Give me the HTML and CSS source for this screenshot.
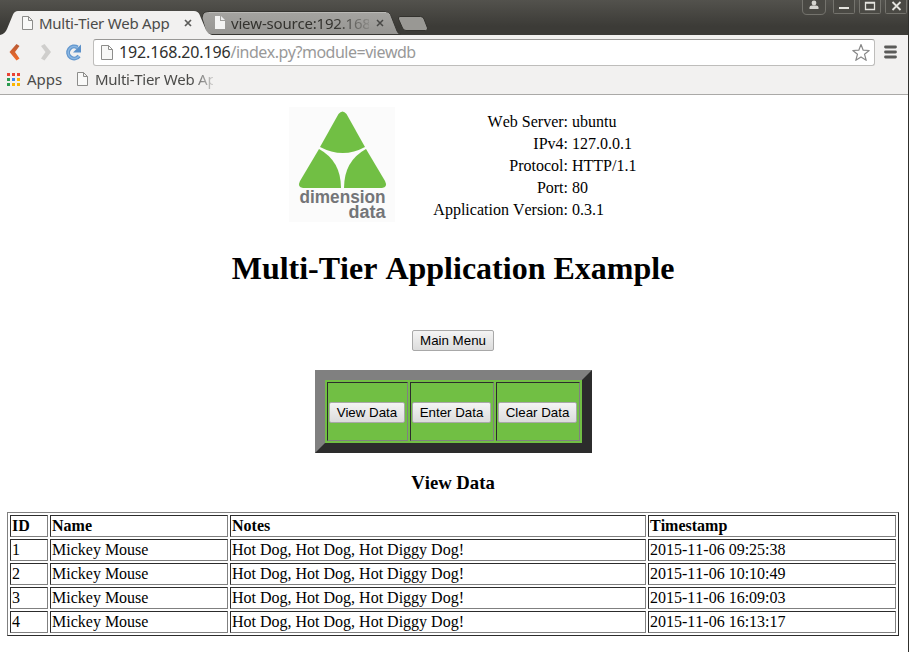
FILE: index.html
```html
<!DOCTYPE html>
<html lang="en">
<head>
<meta charset="utf-8">
<title>Multi-Tier Web App</title>
<link rel="stylesheet" href="styles.css">
</head>
<body>
<div class="window">
  <header class="titlebar">
    <svg class="tab-shapes" width="440" height="35" viewBox="0 0 440 35">
      <defs>
        <linearGradient id="idle" x1="0" y1="0" x2="0" y2="1"><stop offset="0" stop-color="#a5a4a1"/><stop offset="1" stop-color="#969592"/></linearGradient>
      </defs>
      <path d="M203 14Q204.500 11.500 208 11.500H385Q389 11.500 390.500 14.500L397 31Q398 34 401 34.500H212Q207 34.500 205.500 30L202 18Z" fill="url(#idle)" stroke="#373632"/>
      <path d="M209 12.500H386" stroke="#bab9b6"/>
      <path d="M400 16.500H420.500Q423 16.500 424 19L427.500 28Q428 30.500 425.500 30.500H406Q403.500 30.500 402.500 28L398.500 19Q398 16.500 400 16.500Z" fill="#999894" stroke="#33322e"/>
      <path d="M0 35Q5 34 7 29L13 14.500Q14.500 11 18 11H194Q198 11 199.500 14.500L206 30Q208 34 212 35Z" fill="#f2f1f0"/>
    </svg>
    <div class="tab tab-active">
      <svg class="page-icon" width="12" height="15" viewBox="0 0 12 15"><path d="M1.500 1.500H7.500L11.500 5.500V14.500H1.500ZM7.500 1.500V5.500H11.500" fill="#f9f9f8" stroke="#8d8d8b"/></svg>
      <span class="tab-title">Multi-Tier Web App</span>
      <svg class="close" width="8" height="8" viewBox="0 0 8 8"><path d="M1 1L7 7M7 1L1 7" stroke="#5b5b59" stroke-width="1.700"/></svg>
    </div>
    <div class="tab tab-idle">
      <svg class="page-icon" width="12" height="15" viewBox="0 0 12 15"><path d="M1 1H6V6H11V14H1Z" fill="#f4f4f3"/><path d="M7 1L11 5H7Z" fill="#eee"/></svg>
      <span class="tab-title">view-source:192.168</span>
      <svg class="close" width="8" height="8" viewBox="0 0 8 8"><path d="M1 1L7 7M7 1L1 7" stroke="#484846" stroke-width="1.500"/></svg>
    </div>
    <svg class="controls" width="108" height="16" viewBox="0 0 108 16">
      <g fill="#4a4944" stroke="#74736d"><path d="M2.500-2V10Q2.500 14.500 7 14.500H21Q25.500 14.500 25.500 10V-2Z"/><rect x="33.500" y="-3" width="21" height="16.500" rx="1"/><rect x="59.500" y="-3" width="21" height="16.500" rx="1"/><rect x="85.500" y="-3" width="21" height="16.500" rx="1"/></g>
      <circle cx="14" cy="3" r="2.400" fill="#d5d4cf"/><path d="M9.500 9V7.500Q9.500 5.500 12 5.500H16Q18.500 5.500 18.500 7.500V9Z" fill="#d5d4cf"/>
      <path d="M39 8H49" stroke="#e4e3de" stroke-width="2"/><path d="M65.500 2.500H74.500V9.500H65.500ZM65 3H75" fill="none" stroke="#e4e3de" stroke-width="1.300"/>
      <path d="M92.500 2L100.500 10M100.500 2L92.500 10" stroke="#e4e3de" stroke-width="1.800"/>
    </svg>
  </header>
  <div class="toolbar">
    <svg class="nav" width="93" height="35" viewBox="0 0 93 35">
      <defs><linearGradient id="back" x1="0" y1="0" x2="0" y2="1"><stop offset="0" stop-color="#b85a35"/><stop offset="1" stop-color="#f16b29"/></linearGradient></defs>
      <path d="M16.500 9L9.500 17L16.500 25.500L19.500 23.500L15 17L19.500 11Z" fill="url(#back)"/>
      <path d="M44.500 9L51 17L44.500 25.500L41 23.500L45.500 17L41 11Z" fill="#cfcecc"/>
      <path d="M77.500 12.500A6 6 0 1 0 79 21" fill="none" stroke="#6296cd" stroke-width="4"/>
      <path d="M77.500 12.500A6 6 0 1 0 79 21" fill="none" stroke="#8bb7e2" stroke-width="1.500"/>
      <path d="M81 9.500V17.500H73Z" fill="#5c91c9"/>
    </svg>
    <div class="address">
      <svg width="12" height="15" viewBox="0 0 12 15"><path d="M.5 .5H7.500L11.500 4.500V14.500H.5ZM7.500 .5V4.500H11.500" fill="#f7f7f6" stroke="#8d8d8b"/></svg>
      <span class="url"><span class="host">192.168.20.196</span><span class="path">/index.py?module=viewdb</span></span>
      <svg class="star" width="20" height="19" viewBox="0 0 20 19"><path d="M10 1.500L12.200 7.200L18.200 7.500L13.500 11.200L15.200 17.300L10 13.900L4.800 17.300L6.500 11.200L1.800 7.500L7.800 7.200Z" fill="#fff" stroke="#888" stroke-width="1.200" stroke-linejoin="round"/></svg>
    </div>
    <svg class="menu" width="13" height="14" viewBox="0 0 13 14"><path d="M1.500 2H11.500M1.500 7H11.500M1.500 12H11.500" stroke="#5a5a58" stroke-width="2.800" stroke-linecap="round"/></svg>
  </div>
  <nav class="bookmarks">
    <svg width="13" height="13" viewBox="0 0 13 13"><path d="M0 0H3V3H0ZM5 0H8V3H5ZM10 0H13V3H10Z" fill="#e94335"/><path d="M0 5H3V8H0ZM0 10H3V13H0Z" fill="#2b9b50"/><path d="M5 5H8V8H5Z" fill="#3b86ed"/><path d="M10 5H13V8H10ZM5 10H8V13H5ZM10 10H13V13H10Z" fill="#fbb503"/></svg>
    <span class="apps">Apps</span>
    <svg width="12" height="15" viewBox="0 0 12 15"><path d="M.5 .5H6.500L10.500 4.500V13.500H.5ZM6.500 .5V4.500H10.500" fill="#f9f9f8" stroke="#8d8d8b"/></svg>
    <span class="bookmark">Multi-Tier Web Ap</span>
  </nav>
  <main class="page">
    <section class="intro">
      <svg class="logo" width="106" height="115" viewBox="0 0 106 115">
        <rect width="106" height="115" fill="#fbfbfb"/>
        <path d="M31 40L49.500 7Q53.500 2 57.500 7L76 40Q54 52 31 40Z" fill="#71bf44"/>
        <path d="M30 42Q52 54 52 81H14Q8 80 11 74Z" fill="#71bf44"/>
        <path d="M77 42Q55 54 55 81H93Q99 80 96 74Z" fill="#71bf44"/>
        <text x="10.500" y="96" textLength="86" lengthAdjust="spacingAndGlyphs">dimension</text>
        <text x="59.500" y="110.500" textLength="37" lengthAdjust="spacingAndGlyphs">data</text>
      </svg>
      <dl class="info">
        <dt>Web Server:</dt><dd>ubuntu</dd>
        <dt>IPv4:</dt><dd>127.0.0.1</dd>
        <dt>Protocol:</dt><dd>HTTP/1.1</dd>
        <dt>Port:</dt><dd>80</dd>
        <dt>Application Version:</dt><dd>0.3.1</dd>
      </dl>
    </section>
    <h1>Multi-Tier Application Example</h1>
    <button class="main-menu">Main Menu</button>
    <table class="actions"><tr>
      <td class="view"><button>View Data</button></td>
      <td><button>Enter Data</button></td>
      <td><button>Clear Data</button></td>
    </tr></table>
    <h3>View Data</h3>
    <table class="records">
      <colgroup><col class="c-id"><col class="c-name"><col class="c-notes"><col class="c-time"></colgroup>
      <tr><th>ID</th><th>Name</th><th>Notes</th><th>Timestamp</th></tr>
      <tr><td>1</td><td>Mickey Mouse</td><td>Hot Dog, Hot Dog, Hot Diggy Dog!</td><td>2015-11-06 09:25:38</td></tr>
      <tr><td>2</td><td>Mickey Mouse</td><td>Hot Dog, Hot Dog, Hot Diggy Dog!</td><td>2015-11-06 10:10:49</td></tr>
      <tr><td>3</td><td>Mickey Mouse</td><td>Hot Dog, Hot Dog, Hot Diggy Dog!</td><td>2015-11-06 16:09:03</td></tr>
      <tr><td>4</td><td>Mickey Mouse</td><td>Hot Dog, Hot Dog, Hot Diggy Dog!</td><td>2015-11-06 16:13:17</td></tr>
    </table>
  </main>
</div>
</body>
</html>
```
FILE: styles.css
```css
* { box-sizing: border-box; }
body { margin: 0; background: #fff; color: #000; font: 16px/18px "Liberation Serif", serif; font-kerning: none; overflow: hidden; }
svg { display: block; flex: none; }
.window { width: 909px; height: 652px; border-right: 1px solid #30302d; }
.titlebar, .toolbar, .bookmarks { display: flex; font-family: "Noto Sans", sans-serif; white-space: nowrap; }
.titlebar { position: relative; height: 35px; background: linear-gradient(#53524d, #3c3b37 75%); }
.tab-shapes { position: absolute; left: 0; top: 0; }
.tab { position: relative; display: flex; align-items: center; height: 23px; margin-top: 11px; font-size: 15px; color: #4b4b49; }
.tab-active { width: 202px; padding-left: 21px; }
.tab-idle { width: 195px; padding-left: 12px; color: #34332f; }
.tab-title { width: 134px; margin-left: 6px; overflow: hidden; letter-spacing: -.27px; }
.tab-active .close { margin-left: 11px; }
.tab-idle .tab-title { width: 138px; margin-left: 5px; letter-spacing: -.2px; mask-image: linear-gradient(90deg, #000 75%, transparent 105%); }
.tab-idle .close { margin-left: 7px; }
.controls { margin-left: auto; }
.toolbar { height: 35px; background: #f2f1f0; }
.address { display: flex; align-items: center; width: 782px; height: 27px; margin-top: 4px; padding: 0 3px 0 7px; background: #fff; border: 1px solid #bebdbb; border-top-color: #999896; border-radius: 3px; }
.url { margin: -2px 0 0 6px; font-size: 16px; line-height: 24px; }
.host { color: #30302e; letter-spacing: -.15px; }
.path { color: #999; letter-spacing: -.5px; }
.star { margin-left: auto; }
.menu { margin: 10px 0 0 9px; }
.bookmarks { height: 25px; padding: 0 0 5px 7px; align-items: center; background: #f2f1f0; border-bottom: 1px solid #aaa9a7; font-size: 15px; line-height: 19px; color: #4b4b49; }
.apps { width: 35px; margin: 0 15px 0 7px; }
.bookmark { width: 118px; margin-left: 6px; overflow: hidden; letter-spacing: -.27px; mask-image: linear-gradient(90deg, #000 82%, transparent 105%); }
.page { display: flex; flex-direction: column; align-items: center; width: 906px; height: 557px; padding-top: 12px; }
.intro { display: flex; width: 328px; height: 115px; gap: 38px; }
.logo text { font: bold 18px "Liberation Sans", sans-serif; fill: #747578; }
.info { display: grid; grid-template-columns: 135px auto; grid-auto-rows: 22px; column-gap: 4px; margin: 4px 0 0; align-content: start; line-height: 22px; white-space: nowrap; }
.info dt { text-align: right; }
.info dd { margin: 0; }
h1 { margin: 28px 0 43px; font-size: 32px; line-height: 37px; }
button { display: block; height: 21px; margin: 0; padding: 0; border: 1px solid #a8a8a8; border-radius: 2px; background: linear-gradient(#f4f4f4, #dcdcdc); font: 13.333px/17px "Liberation Sans", sans-serif; color: #000; }
.main-menu { width: 82px; flex: none; }
table { border-spacing: 2px; border-collapse: separate; flex: none; }
td, th { padding: 1px; border: 1px solid; border-color: #2c2c2c #808080 #808080 #2c2c2c; text-align: left; }
.actions { width: 277px; height: 83px; margin: 19px 0 0 1px; background: #71bf44; background-clip: padding-box; border: 10px solid; border-color: #808080 #2c2c2c #2c2c2c #808080; table-layout: fixed; }
.actions td { width: 84px; height: 59px; padding-top: 3px; }
.actions .view { width: 81px; }
.actions button { width: 79px; }
.actions .view button { width: 76px; }
h3 { margin: 19px 0 18px; font-size: 18.72px; line-height: 22px; }
.records { width: 892px; table-layout: fixed; border: 1px solid; border-color: #808080 #2c2c2c #2c2c2c #808080; }
.c-id { width: 38px; }
.c-name { width: 178px; }
.c-notes { width: 416px; }
.c-time { width: 248px; }
```
